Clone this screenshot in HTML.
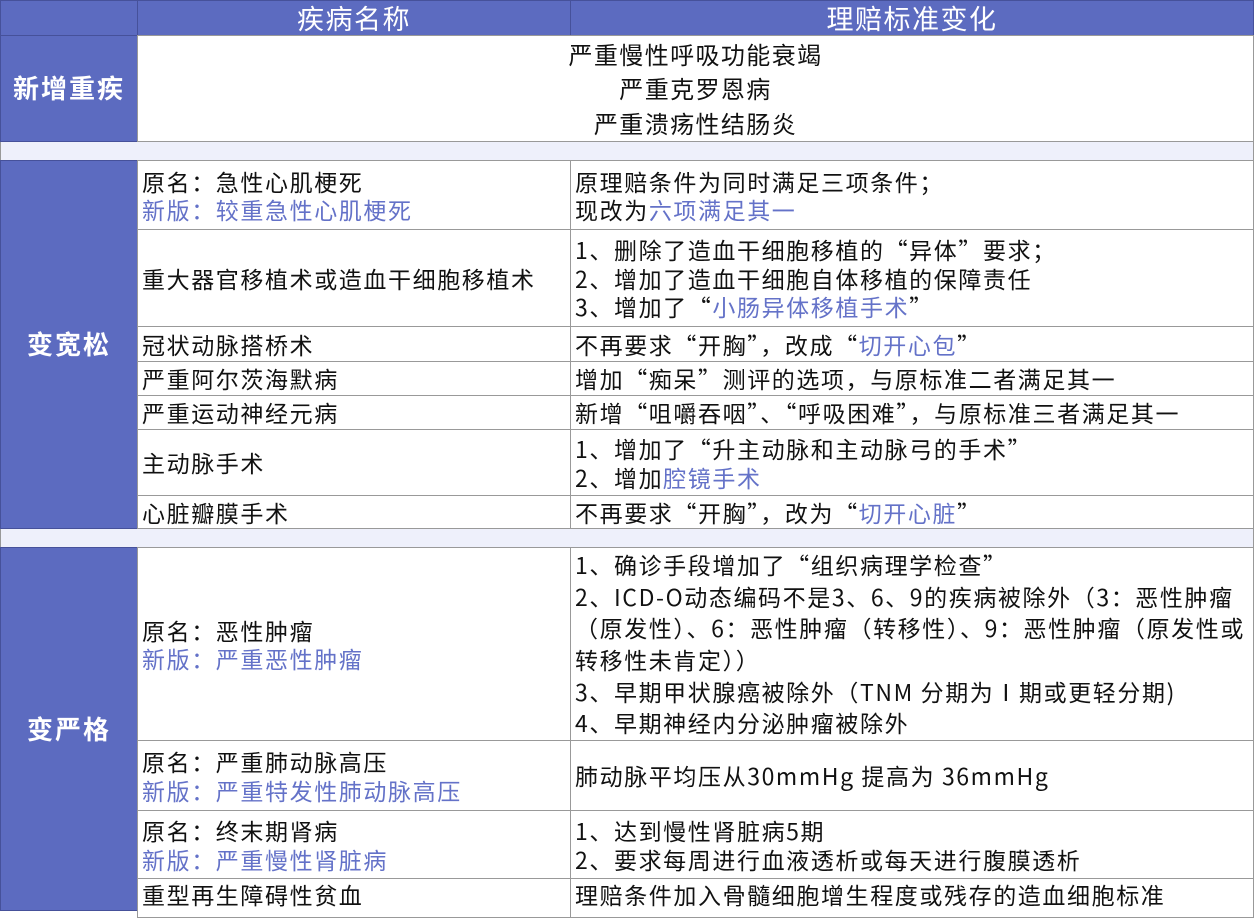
<!DOCTYPE html>
<html><head><meta charset="utf-8"><style>
body{margin:0;width:1254px;height:911px;overflow:hidden;background:#fff;font-family:"Noto Sans CJK SC","Liberation Sans",sans-serif;color:#111;}
.c{position:absolute;box-sizing:border-box;display:flex;flex-direction:column;justify-content:center;font-size:23px;letter-spacing:1.6px;line-height:28.5px;padding-left:4px;border:1px solid #999;background:transparent;white-space:nowrap;}
.b{background:#5c6bc0;color:#fff;align-items:center;padding:0;font-size:26px;letter-spacing:2px;font-weight:bold;border-color:#46519a;}
.hd{font-size:27px;font-weight:normal;letter-spacing:1.5px;}
.g{position:absolute;left:0;width:1254px;background:#eef0fb;border:1px solid #999;box-sizing:border-box;}
.h{color:#6472c8;}
.ctr{align-items:center;padding:0}
</style></head><body>
<div class="g" style="top:141px;height:20px"></div>
<div class="g" style="top:528px;height:20px"></div>
<div class="c b" style="left:0;top:0;width:138px;height:36px"></div>
<div class="c b hd" style="left:137px;top:0;width:434px;height:36px">疾病名称</div>
<div class="c b hd" style="left:570px;top:0;width:684px;height:36px">理赔标准变化</div>
<div class="c b" style="left:0;top:35px;width:138px;height:107px">新增重疾</div>
<div class="c ctr" style="left:137px;top:35px;width:1117px;height:107px;line-height:34.5px;font-size:24px;letter-spacing:1.4px"><div>严重慢性呼吸功能衰竭</div><div>严重克罗恩病</div><div>严重溃疡性结肠炎</div></div>

<div class="c b" style="left:0;top:160px;width:138px;height:369px">变宽松</div>
<div class="c" style="left:137px;top:160px;width:434px;height:70px"><div>原名：急性心肌梗死</div><div class="h">新版：较重急性心肌梗死</div></div>
<div class="c" style="left:570px;top:160px;width:684px;height:70px"><div>原理赔条件为同时满足三项条件；</div><div>现改为<span class="h">六项满足其一</span></div></div>
<div class="c" style="left:137px;top:229px;width:434px;height:98px"><div>重大器官移植术或造血干细胞移植术</div></div>
<div class="c" style="left:570px;top:229px;width:684px;height:98px"><div>1、删除了造血干细胞移植的“异体”要求；</div><div>2、增加了造血干细胞自体移植的保障责任</div><div>3、增加了“<span class="h">小肠异体移植手术</span>”</div></div>
<div class="c" style="left:137px;top:326px;width:434px;height:36px">冠状动脉搭桥术</div>
<div class="c" style="left:570px;top:326px;width:684px;height:36px"><div>不再要求“开胸”，改成“<span class="h">切开心包</span>”</div></div>
<div class="c" style="left:137px;top:361px;width:434px;height:35px">严重阿尔茨海默病</div>
<div class="c" style="left:570px;top:361px;width:684px;height:35px">增加“痴呆”测评的选项，与原标准二者满足其一</div>
<div class="c" style="left:137px;top:395px;width:434px;height:35px">严重运动神经元病</div>
<div class="c" style="left:570px;top:395px;width:684px;height:35px">新增“咀嚼吞咽”、“呼吸困难”，与原标准三者满足其一</div>
<div class="c" style="left:137px;top:429px;width:434px;height:67px">主动脉手术</div>
<div class="c" style="left:570px;top:429px;width:684px;height:67px"><div>1、增加了“升主动脉和主动脉弓的手术”</div><div>2、增加<span class="h">腔镜手术</span></div></div>
<div class="c" style="left:137px;top:495px;width:434px;height:34px">心脏瓣膜手术</div>
<div class="c" style="left:570px;top:495px;width:684px;height:34px"><div>不再要求“开胸”，改为“<span class="h">切开心脏</span>”</div></div>

<div class="c b" style="left:0;top:547px;width:138px;height:364px">变严格</div>
<div class="c" style="left:137px;top:547px;width:434px;height:194px"><div>原名：恶性肿瘤</div><div class="h">新版：严重恶性肿瘤</div></div>
<div class="c" style="left:570px;top:547px;width:684px;height:194px;line-height:31.6px"><div>1、确诊手段增加了“组织病理学检查”</div><div>2、ICD-O动态编码不是3、6、9的疾病被除外（3：恶性肿瘤</div><div>（原发性）、6：恶性肿瘤（转移性）、9：恶性肿瘤（原发性或</div><div>转移性未肯定））</div><div>3、早期甲状腺癌被除外（TNM 分期为Ⅰ期或更轻分期)</div><div>4、早期神经内分泌肿瘤被除外</div></div>
<div class="c" style="left:137px;top:740px;width:434px;height:71px"><div>原名：严重肺动脉高压</div><div class="h">新版：严重特发性肺动脉高压</div></div>
<div class="c" style="left:570px;top:740px;width:684px;height:71px">肺动脉平均压从30mmHg 提高为 36mmHg</div>
<div class="c" style="left:137px;top:810px;width:434px;height:69px"><div>原名：终末期肾病</div><div class="h">新版：严重慢性肾脏病</div></div>
<div class="c" style="left:570px;top:810px;width:684px;height:69px"><div>1、达到慢性肾脏病5期</div><div>2、要求每周进行血液透析或每天进行腹膜透析</div></div>
<div class="c" style="left:137px;top:878px;width:434px;height:40px;justify-content:flex-start;padding-top:1px">重型再生障碍性贫血</div>
<div class="c" style="left:570px;top:878px;width:684px;height:40px;justify-content:flex-start;padding-top:1px">理赔条件加入骨髓细胞增生程度或残存的造血细胞标准</div>
</body></html>
